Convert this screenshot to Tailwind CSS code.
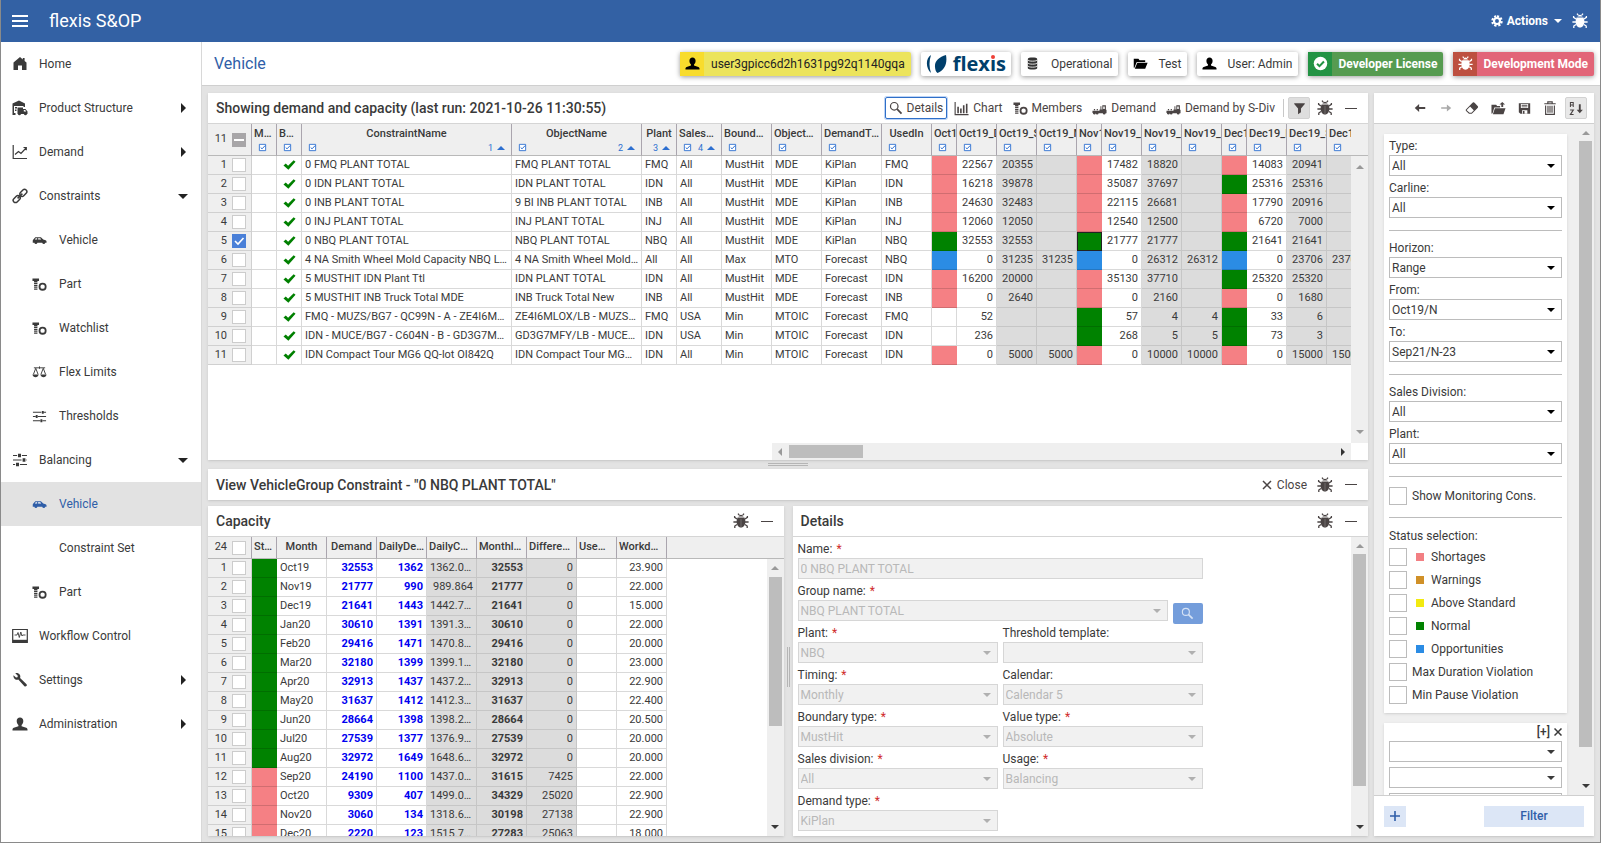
<!DOCTYPE html>
<html lang="en">
<head>
  <meta charset="UTF-8">
  <meta name="viewport" content="width=device-width, initial-scale=1.0">
  <title>flexis S&amp;OP</title>
  <script src="https://cdn.jsdelivr.net/npm/@tailwindcss/browser@4"></script>
</head>
<body class="font-['Roboto',sans-serif] text-xs text-[#3a3a3a] bg-[#e3e3e3] h-screen flex flex-col overflow-hidden border-x border-b border-[#8a8a8a]">

  <!-- icon set -->
  <svg class="hidden" aria-hidden="true">
    <symbol id="i-bug" viewBox="0 0 16 16"><path fill="currentColor" d="M5.5 3.6a2.6 2.6 0 0 1 5 0zM4.6 4.4h6.8c.7 1.2 1 2.600 1 4.200 0 3.300-1.700 6-4.400 6s-4.400-2.700-4.400-6c0-1.600.3-3 1-4.200z"/><path fill="none" stroke="currentColor" stroke-width="1.300" d="M6.200 2 5 .6M9.800 2 11 .6M4 6 1.600 4.400V3M12 6l2.400-1.600V3M4 9H.4M12 9h3.600M4 11.500 1.800 13v2M12 11.500l2.200 1.500v2"/><path stroke="#fff" stroke-opacity=".35" stroke-width=".6" d="M8 6v8"/></symbol>
    <symbol id="i-user" viewBox="0 0 16 16"><path fill="currentColor" d="M8 1.500c2 0 3.300 1.400 3.300 3.500 0 1.700-.7 3.200-1.700 4v1.200l4.600 1.500c.8.3 1.300.9 1.300 1.800v1H.5v-1c0-.9.5-1.500 1.300-1.800l4.600-1.500V9c-1-.8-1.700-2.300-1.700-4C4.700 2.900 6 1.500 8 1.500z"/></symbol>
    <symbol id="i-home" viewBox="0 0 16 16"><path fill="currentColor" d="M8 1 1.500 6.500V14H6V9.500h4V14h4.500V6.500L12.600 5V2h-1.800v1.400z"/></symbol>
    <symbol id="i-depot" viewBox="0 0 16 16"><path fill="currentColor" d="M7 .5.5 3.500V15h3V13H2V6h9.500v1H13V3.500z"/><path fill="currentColor" d="M3 7h2v1.500H3zM3 9.500h1.500V11H3zM5.500 7.500H11V9h2.500l2 2.500V14H15a1.600 1.600 0 0 1-3.100 0H9a1.600 1.600 0 0 1-3.100 0H5.500z"/><path fill="#fff" d="M11.800 10h1.400l1 1.500h-2.400z"/></symbol>
    <symbol id="i-line" viewBox="0 0 16 16"><path fill="none" stroke="currentColor" stroke-width="1.200" d="M1.200 1v13.500H15M3 10.500l3.500-3 2.500 2 5-5.500M11.500 3.500h2.800v2.800"/></symbol>
    <symbol id="i-link" viewBox="0 0 16 16"><g fill="none" stroke="currentColor" stroke-width="1.500"><rect x="7.300" y="2.600" width="8" height="4.600" rx="2.300" transform="rotate(-45 11.300 4.900)"/><rect x=".7" y="8.800" width="8" height="4.600" rx="2.300" transform="rotate(-45 4.700 11.100)"/><path d="m5.600 10.400 4.800-4.800"/></g></symbol>
    <symbol id="i-car" viewBox="0 0 16 16"><path fill="currentColor" d="M1 7.500 3.500 4.500h6L12 7l2.500.6c.7.200 1 .6 1 1.400v1.500h-1.300a1.700 1.700 0 0 1-3.300 0H5.800a1.700 1.700 0 0 1-3.300 0H.8V8z"/><path fill="#fff" d="M4 5.500 3 7h2.500V5.500zM6.500 5.500V7h3.300L8.800 5.500z"/></symbol>
    <symbol id="i-bolt" viewBox="0 0 16 16"><path fill="currentColor" d="M.5 1.500h7v2.700H5.800v1.300H2.200V4.200H.5zM2.200 6.200h3.600v1.300H2.200zM2.200 8.200h3.600v1.300H2.200zM2.200 10.200h3.600v1.300H2.200zM2.200 12.200h3.600v1.500H2.200z"/><circle cx="11.300" cy="10.300" r="3.300" fill="none" stroke="currentColor" stroke-width="1.900"/></symbol>
    <symbol id="i-scale" viewBox="0 0 16 16"><path fill="none" stroke="currentColor" stroke-width="1" d="M2 3h12M8 1.500V4M4 3.500 1.500 10M4 3.500 6.500 10M12 3.500 9.500 10M12 3.500l2.500 6.500"/><path fill="currentColor" d="M.5 10h6.500c-.3 1.800-1.500 3-3.200 3S.8 11.800.5 10zM9 10h6.500c-.3 1.800-1.500 3-3.200 3S9.300 11.800 9 10z"/></symbol>
    <symbol id="i-sliders" viewBox="0 0 16 16"><path stroke="currentColor" stroke-width="1.200" d="M1 3.500h14M1 8h14M1 12.500h14"/><path fill="currentColor" d="M6 1.800h3v3.400H6zM10.500 6.300h3v3.400h-3zM4 10.800h3v3.400H4z"/><path stroke="#fff" stroke-width=".9" d="M5.500 2v3M9.500 2v3M10 6.500v3M14 6.500v3M3.500 11v3M7.500 11v3"/></symbol>
    <symbol id="i-thresh" viewBox="0 0 16 16"><path stroke="currentColor" stroke-width="1.200" d="M1 3.500h9M12 3.500h3M1 8h3M6 8h9M1 12.500h8M11 12.500h4"/><path fill="currentColor" d="M10.500 2h2v3h-2zM4 6.500h2v3H4zM9 11h2v3H9z"/></symbol>
    <symbol id="i-monitor" viewBox="0 0 16 16"><path fill="none" stroke="currentColor" stroke-width="1.200" d="M.7 1.500h14.600v13H.7z"/><path fill="currentColor" d="M.7 11.800h14.600v2.700H.7z"/><path fill="none" stroke="currentColor" stroke-width=".9" d="M2.500 7H5l1-2.500 1.300 5L8.800 4l1.200 4 .7-1h2.800"/></symbol>
    <symbol id="i-wrench" viewBox="0 0 16 16"><path fill="currentColor" d="M1.500 3.200 4 5.500l1.500-.3.300-1.500-2.500-2.400c1.700-.5 3.400 0 4.300 1.300.8 1 .9 2.200.5 3.300l6.200 6c.7.700.7 1.600.1 2.200s-1.600.6-2.200-.1L6.300 7.600c-1.100.4-2.500.2-3.500-.7-1-.9-1.600-2.300-1.300-3.700z"/></symbol>
    <symbol id="i-gear" viewBox="0 0 16 16"><path fill="none" stroke="currentColor" stroke-width="3" stroke-dasharray="2.800 2.100" d="M8 1.800a6.200 6.200 0 1 1-.01 0"/><circle cx="8" cy="8" r="4" fill="none" stroke="currentColor" stroke-width="2.800"/></symbol>
    <symbol id="i-search" viewBox="0 0 16 16"><circle cx="6" cy="6" r="4.300" fill="none" stroke="currentColor" stroke-width="1.400"/><path stroke="currentColor" stroke-width="2" d="m9.300 9.300 5 5"/></symbol>
    <symbol id="i-bars" viewBox="0 0 16 16"><path fill="none" stroke="currentColor" stroke-width="1.200" d="M1.200 1v13.500H15.500"/><path fill="currentColor" d="M3.500 6h1.700v7H3.500zM6.500 8h1.700v5H6.500zM9.500 4.500h1.700V13H9.500zM12.700 3h1.700v10h-1.700z"/></symbol>
    <symbol id="i-truck" viewBox="0 0 16 16"><path fill="currentColor" d="M.5 10.500H8V9h1V5.500h1V9h1V4.500h3.800V9l.7.500V13h-1a1.500 1.500 0 0 1-3 0H7a1.500 1.500 0 0 1-3 0 1.500 1.500 0 0 1-3-.3H.5zM2 8.500h1.300v1.300H2zM5 8.500h1.300v1.300H5z"/><path fill="#fff" d="M12 5.800h1.600V8.500H12z"/></symbol>
    <symbol id="i-funnel" viewBox="0 0 16 16"><path fill="currentColor" d="M1.500 1.500h13v1L9.800 8v4.500L6.200 15V8L1.500 2.500z"/></symbol>
    <symbol id="i-eraser" viewBox="0 0 16 16"><path fill="#fff" stroke="currentColor" stroke-width="1.200" d="M1.500 10 9 2.500c.5-.5 1-.5 1.500 0L14 6c.5.500.5 1 0 1.500L7.500 14H4.800L1.500 11z"/><path fill="currentColor" d="M5.500 6 9 2.500c.5-.5 1-.5 1.500 0L14 6c.5.500.5 1 0 1.500L10.500 11z"/></symbol>
    <symbol id="i-folder-up" viewBox="0 0 16 16"><path fill="currentColor" d="M.5 4h5l1 1.300h3.200V6.800H3.500L1.700 13 .5 13.500zM4.200 7.700H15.500L13.300 14H2zM12 1l3 2.800h-2V6.500h-2V3.800H9z"/></symbol>
    <symbol id="i-folder" viewBox="0 0 16 16"><path fill="currentColor" d="M.8 3h5l1.200 1.500h6V6.500H4L1.500 12.500H.8zM4.600 7.300h11L13 13.500H1.900z"/></symbol>
    <symbol id="i-save" viewBox="0 0 16 16"><path fill="currentColor" d="M1 1.500h14v13H3l-2-2z"/><path fill="#fff" d="M3.500 2.500h9v5h-9zM5 10h6.500v4.500H5z"/><path fill="currentColor" d="M4.500 3.500h7v1h-7zM4.500 5.500h7v1h-7zM6 11h2v3.500H6z"/></symbol>
    <symbol id="i-trash" viewBox="0 0 16 16"><path fill="none" stroke="currentColor" stroke-width="1.300" d="M1.500 3.200h13M5.500 3V1h5v2M3 5v10.300h10V5M5.700 5.500v8M8 5.500v8M10.300 5.500v8"/></symbol>
    <symbol id="i-left" viewBox="0 0 16 16"><path fill="currentColor" d="M7 3.500v3.300h7v2.400H7v3.300L2 8z"/></symbol>
    <symbol id="i-right" viewBox="0 0 16 16"><path fill="currentColor" d="M9 4v3.200H2.500v1.600H9V12l5-4z"/></symbol>
    <symbol id="i-sort" viewBox="0 0 16 16"><path fill="none" stroke="currentColor" stroke-width="1.100" d="M1.500 6.500v-5h3v5M1.500 4.200h3M1.200 9.500h3.500l-3.300 5h3.500"/><path fill="currentColor" d="M10.500 3.500h2v5.800h2.300L11.500 13 8.200 9.300h2.300z"/></symbol>
    <symbol id="i-ok" viewBox="0 0 16 16"><circle cx="8" cy="8" r="7.200" fill="#fff"/><path fill="none" stroke="#239344" stroke-width="2.200" d="m4.300 8.200 2.600 2.600 4.800-5"/></symbol>
    <symbol id="i-db" viewBox="0 0 16 16"><path fill="#333" d="M3 3.200C3 1.200 13 1.200 13 3.200v9.800c0 2-10 2-10 0z"/><path fill="none" stroke="#fff" stroke-width=".9" d="M3 4c0 2 10 2 10 0M3 7.200c0 2 10 2 10 0M3 10.400c0 2 10 2 10 0"/></symbol>
    <symbol id="i-tick" viewBox="0 0 14 12"><path fill="#008000" d="M.5 6.500 3 4.500l2.500 2.300L11.500.8l2 1.700L5.800 11z"/></symbol>
    <symbol id="i-filt" viewBox="0 0 10 10"><path fill="#fff" stroke="#2d6fd0" d="M1.500 1.500h7v7h-7z"/><path fill="none" stroke="#2d6fd0" stroke-width="1.100" d="m3 5 1.500 1.500L8 2.800"/></symbol>
    <symbol id="i-down" viewBox="0 0 8 4"><path fill="currentColor" d="M0 0h8L4 4z"/></symbol>
    <symbol id="i-up" viewBox="0 0 8 4"><path fill="currentColor" d="M0 4h8L4 0z"/></symbol>
  </svg>

  <header class="h-[42px] shrink-0 bg-[#3361a4] text-white flex items-center pl-[11px] pr-3">
    <button class="w-4 flex flex-col gap-[3px]" aria-label="Menu">
      <span class="h-0.5 w-4 bg-white"></span><span class="h-0.5 w-4 bg-white"></span><span class="h-0.5 w-4 bg-white"></span>
    </button>
    <h1 class="ml-[21px] text-lg">flexis S&amp;OP</h1>
    <button class="ml-auto flex items-center gap-1 font-bold">
      <svg class="size-3"><use href="#i-gear"/></svg>Actions<svg class="w-2 h-1 ml-0.5"><use href="#i-down"/></svg>
    </button>
    <button class="ml-[10px]" aria-label="Debug"><svg class="size-4"><use href="#i-bug"/></svg></button>
  </header>

  <div class="flex flex-1 min-h-0">
    <nav id="nav" class="w-[201px] shrink-0 bg-white border-r border-[#d8d8d8]"></nav>

    <main class="flex-1 min-w-0 flex flex-col">
      <div class="h-[44px] shrink-0 bg-white border-b border-[#cfcfcf] flex items-center pl-3 pr-1.5 gap-[10px]">
        <h2 class="text-base text-[#2f5ea8] mr-auto">Vehicle</h2>
        <div class="h-6 flex items-center bg-[#ece45c] rounded-xs shadow-[0_1px_5px_rgba(0,0,0,0.4)] pr-1.5 text-[#222]">
          <span class="size-6 bg-[#f8dc2c] flex items-center justify-center mr-[7px] text-black"><svg class="size-[15px]"><use href="#i-user"/></svg></span>user3gpicc6d2h1631pg92q1140gqa
        </div>
        <div class="h-6 flex items-center bg-white rounded-xs shadow-[0_1px_5px_rgba(0,0,0,0.4)] px-[5px] gap-[6px]">
          <svg class="w-[21px] h-5" viewBox="0 0 21 20"><path fill="#003f6b" d="M5 1C-.5 4-.5 14 5 19 3 13 3 7 5 1zM20 1C13 3 8.500 7 9 13c.2 3 1 5 2.500 6C19 16 21.500 9 20 1z"/></svg>
          <span class="relative font-['Open_Sans',sans-serif] font-bold text-xl leading-6 text-[#003f6b]">flexıs<span class="absolute right-[11px] top-[3px] size-1 rounded-full bg-[#ee4037]"></span></span>
        </div>
        <div class="h-6 flex items-center bg-white rounded-xs shadow-[0_1px_5px_rgba(0,0,0,0.4)] pr-1.5"><span class="size-6 flex items-center justify-center mr-[6px]"><svg class="size-[15px]"><use href="#i-db"/></svg></span>Operational</div>
        <div class="h-6 flex items-center bg-white rounded-xs shadow-[0_1px_5px_rgba(0,0,0,0.4)] pr-1.5"><span class="size-6 flex items-center justify-center mr-[6px] text-black"><svg class="size-[15px]"><use href="#i-folder"/></svg></span>Test</div>
        <div class="h-6 flex items-center bg-white rounded-xs shadow-[0_1px_5px_rgba(0,0,0,0.4)] pr-1.5"><span class="size-6 flex items-center justify-center mr-[6px] text-black"><svg class="size-[15px]"><use href="#i-user"/></svg></span>User: Admin</div>
        <div class="h-6 flex items-center bg-[#569b50] rounded-xs shadow-[0_1px_5px_rgba(0,0,0,0.4)] pr-1.5 text-white font-bold"><span class="size-6 bg-[#239344] flex items-center justify-center mr-[6px]"><svg class="size-[15px]"><use href="#i-ok"/></svg></span>Developer License</div>
        <div class="h-6 flex items-center bg-[#e26578] rounded-xs shadow-[0_1px_5px_rgba(0,0,0,0.4)] pr-1.5 text-white font-bold"><span class="size-6 bg-[#bd5040] flex items-center justify-center mr-[6px]"><svg class="size-[15px]"><use href="#i-bug"/></svg></span>Development Mode</div>
      </div>

      <div class="flex-1 min-h-0 flex pt-[7px] pb-1.5 px-1.5 gap-1.5">

        <div class="flex-1 min-w-0 flex flex-col">
          <!-- demand and capacity grid -->
          <section class="flex-[367_1_0%] min-h-0 bg-white shadow flex flex-col">
            <div class="h-[30px] shrink-0 flex items-center pl-2 pr-[11px]">
              <h3 class="text-sm font-medium mr-auto">Showing demand and capacity (last run: 2021-10-26 11:30:55)</h3>
              <div class="flex items-center text-[#4a4444]">
                <button class="h-[22px] flex items-center gap-1 border border-[#2f6fc8] rounded-xs px-[3px] ring-1 ring-[#bcd3f5] mr-[7px]"><svg class="size-[14px]"><use href="#i-search"/></svg>Details</button>
                <button class="flex items-center gap-1 mr-[10px]"><svg class="size-[15px]"><use href="#i-bars"/></svg>Chart</button>
                <button class="flex items-center gap-1 mr-[10px]"><svg class="size-[15px]"><use href="#i-bolt"/></svg>Members</button>
                <button class="flex items-center gap-1 mr-[10px]"><svg class="size-[15px]"><use href="#i-truck"/></svg>Demand</button>
                <button class="flex items-center gap-1 mr-2"><svg class="size-[15px]"><use href="#i-truck"/></svg>Demand by S-Div</button>
                <span class="w-px h-[18px] bg-[#c8c8c8]"></span>
                <button class="h-[22px] w-[22px] ml-1 flex items-center justify-center bg-[#dedede] border border-[#d2d2d2] rounded-xs" aria-label="Filter grid"><svg class="size-[13px]"><use href="#i-funnel"/></svg></button>
                <button class="ml-[7px]" aria-label="Debug"><svg class="size-4"><use href="#i-bug"/></svg></button>
                <button class="ml-3 w-3 h-4 flex items-center" aria-label="Minimize"><span class="w-3 h-px bg-[#4a4444]"></span></button>
              </div>
            </div>
            <div class="flex-1 min-h-0 flex border-t border-[#d5d5d5]">
              <div class="flex-1 min-w-0 flex flex-col">
                <div class="flex-1 overflow-hidden">
                  <table class="table-fixed w-[1159px] border-separate border-spacing-0 text-[11px]">
                    <colgroup id="mainCols"></colgroup>
                    <thead id="mainHead"></thead>
                    <tbody id="mainBody"></tbody>
                  </table>
                </div>
                <div class="h-[17px] shrink-0 ml-[564px] bg-[#efefef] flex items-center justify-between px-1.5">
                  <svg class="w-1 h-2 text-[#999]" viewBox="0 0 4 8"><path fill="currentColor" d="M4 0v8L0 4z"/></svg>
                  <span class="w-[74px] h-[13px] bg-[#bdbdbd] ml-[7px] mr-auto"></span>
                  <svg class="w-1 h-2" viewBox="0 0 4 8"><path fill="#333" d="M0 0v8l4-4z"/></svg>
                </div>
              </div>
              <div class="w-[17px] flex flex-col">
                <div class="h-8 bg-[#efefef] border-b border-[#b9b9b9]"></div>
                <div class="flex-1 bg-[#efefef] flex flex-col items-center justify-between py-[9px] text-[#999]">
                  <svg class="w-2 h-1"><use href="#i-up"/></svg><svg class="w-2 h-1"><use href="#i-down"/></svg>
                </div>
                <div class="h-[17px] bg-white"></div>
              </div>
            </div>
          </section>

          <div class="h-[9px] shrink-0 flex flex-col items-center justify-center gap-px">
            <span class="w-10 h-px bg-[#b5b5b5]"></span><span class="w-10 h-px bg-[#b5b5b5]"></span>
          </div>

          <section class="h-[31px] shrink-0 bg-white shadow flex items-center pl-2 pr-[11px] text-[#4a4444]">
            <h3 class="text-sm font-medium mr-auto text-[#3a3a3a]">View VehicleGroup Constraint - "0 NBQ PLANT TOTAL"</h3>
            <button class="flex items-center gap-[5px]"><svg class="size-[10px]" viewBox="0 0 10 10"><path stroke="currentColor" stroke-width="1.500" d="m1 1 8 8M9 1 1 9"/></svg>Close</button>
            <button class="ml-[10px]" aria-label="Debug"><svg class="size-4"><use href="#i-bug"/></svg></button>
            <button class="ml-3 w-3 h-4 flex items-center" aria-label="Minimize"><span class="w-3 h-px bg-[#4a4444]"></span></button>
          </section>

          <div class="flex-[330_1_0%] min-h-0 mt-1.5 flex">
            <!-- capacity -->
            <section class="flex-1 min-w-0 bg-white shadow flex flex-col">
              <div class="h-[30px] shrink-0 flex items-center pl-2 pr-[11px] text-[#4a4444]">
                <h3 class="text-sm font-medium mr-auto text-[#3a3a3a]">Capacity</h3>
                <button aria-label="Debug"><svg class="size-4"><use href="#i-bug"/></svg></button>
                <button class="ml-3 w-3 h-4 flex items-center" aria-label="Minimize"><span class="w-3 h-px bg-[#4a4444]"></span></button>
              </div>
              <div class="flex-1 min-h-0 flex border-t border-[#d5d5d5]">
                <div class="flex-1 min-w-0 overflow-hidden">
                  <table class="table-fixed w-full border-separate border-spacing-0 text-[11px]">
                    <colgroup id="capCols"></colgroup>
                    <thead id="capHead"></thead>
                    <tbody id="capBody"></tbody>
                  </table>
                </div>
                <div class="w-[17px] flex flex-col">
                  <div class="h-[22px] bg-[#efefef] border-b border-[#b9b9b9]"></div>
                  <div class="flex-1 bg-[#efefef] flex flex-col items-center py-[7px]">
                    <svg class="w-2 h-1 text-[#999]"><use href="#i-up"/></svg>
                    <span class="w-[13px] h-[149px] mt-[7px] mb-auto bg-[#bdbdbd]"></span>
                    <svg class="w-2 h-1"><use href="#i-down"/></svg>
                  </div>
                </div>
              </div>
            </section>

            <div class="w-[9px] shrink-0 flex items-center justify-center gap-px pb-2">
              <span class="h-10 w-px bg-[#b5b5b5]"></span><span class="h-10 w-px bg-[#b5b5b5]"></span>
            </div>

            <!-- details form -->
            <section class="flex-1 min-w-0 bg-white shadow flex flex-col">
              <div class="h-[30px] shrink-0 flex items-center pl-2 pr-[11px] text-[#4a4444]">
                <h3 class="text-sm font-medium mr-auto text-[#3a3a3a]">Details</h3>
                <button aria-label="Debug"><svg class="size-4"><use href="#i-bug"/></svg></button>
                <button class="ml-3 w-3 h-4 flex items-center" aria-label="Minimize"><span class="w-3 h-px bg-[#4a4444]"></span></button>
              </div>
              <div class="flex-1 min-h-0 flex border-t border-[#d5d5d5]">
                <form id="details" class="flex-1 min-w-0 overflow-hidden pl-[5px] grid grid-cols-[200px_200px] gap-x-[5px] content-start"></form>
                <div class="w-[17px] bg-[#efefef] flex flex-col items-center py-[7px]">
                  <svg class="w-2 h-1 text-[#999]"><use href="#i-up"/></svg>
                  <span class="w-[13px] h-[232px] mt-1.5 mb-auto bg-[#bdbdbd]"></span>
                  <svg class="w-2 h-1"><use href="#i-down"/></svg>
                </div>
              </div>
            </section>
          </div>
        </div>

        <!-- filter panel -->
        <aside class="w-[220px] shrink-0 bg-white shadow flex flex-col">
          <div class="h-[30px] shrink-0 flex items-center justify-end pr-[7px] gap-3 text-[#4a4444]">
            <button aria-label="Back"><svg class="size-[14px]"><use href="#i-left"/></svg></button>
            <button class="text-[#aaa]" aria-label="Forward"><svg class="size-[14px]"><use href="#i-right"/></svg></button>
            <button aria-label="Clear"><svg class="size-[14px]"><use href="#i-eraser"/></svg></button>
            <button aria-label="Open"><svg class="size-[15px]"><use href="#i-folder-up"/></svg></button>
            <button aria-label="Save"><svg class="size-[13px]"><use href="#i-save"/></svg></button>
            <button aria-label="Delete"><svg class="w-[14px] h-4"><use href="#i-trash"/></svg></button>
            <button class="size-[22px] -ml-1 flex items-center justify-center bg-[#e8e8e8] border border-[#d2d2d2] rounded-xs" aria-label="Sort"><svg class="size-[15px]"><use href="#i-sort"/></svg></button>
          </div>
          <div class="flex-1 min-h-0 flex bg-[#efefef] border-y border-[#cfcfcf]">
            <div class="flex-1 min-w-0 overflow-hidden px-[10px] pt-[10px]">
              <form id="filters" class="bg-white shadow px-[5px] pb-1"></form>
              <div class="bg-white shadow px-[5px] mt-[10px] pb-4 flex flex-col gap-[5px]">
                <div class="h-[13px] flex items-center justify-end gap-1 pt-[5px] leading-3"><button class="font-medium" aria-label="Expand">[+]</button><button aria-label="Remove"><svg class="size-2" viewBox="0 0 8 8"><path stroke="currentColor" stroke-width="1.500" d="m.5.5 7 7M7.500.5l-7 7"/></svg></button></div>
                <div class="relative"><select class="appearance-none block w-full h-[21px] border border-[#bcbcbc] bg-white" aria-label="Extra field"><option></option></select><svg class="absolute right-[7px] top-[9px] w-2 h-1 pointer-events-none"><use href="#i-down"/></svg></div>
                <div class="relative"><select class="appearance-none block w-full h-[21px] border border-[#bcbcbc] bg-white" aria-label="Extra operator"><option></option></select><svg class="absolute right-[7px] top-[9px] w-2 h-1 pointer-events-none"><use href="#i-down"/></svg></div>
                <input class="block w-full h-[21px] border border-[#bcbcbc] bg-white" aria-label="Extra value">
              </div>
            </div>
            <div class="w-[17px] flex flex-col items-center py-[7px]">
              <svg class="w-2 h-1 text-[#999]"><use href="#i-up"/></svg>
              <span class="w-[13px] h-[606px] mt-1.5 mb-auto bg-[#bdbdbd]"></span>
              <svg class="w-2 h-1"><use href="#i-down"/></svg>
            </div>
          </div>
          <div class="h-10 shrink-0 flex items-center justify-between px-[10px]">
            <button class="w-[22px] h-[21px] bg-[#dce6f6] flex items-center justify-center text-[#2f5ea8]" aria-label="Add"><svg class="size-[10px]" viewBox="0 0 10 10"><path stroke="currentColor" stroke-width="1.600" d="M5 0v10M0 5h10"/></svg></button>
            <button class="w-[100px] h-[21px] bg-[#dce6f6] text-[#2f5ea8] font-medium">Filter</button>
          </div>
        </aside>
      </div>
    </main>
  </div>

  <script>
    const el = (id) => document.getElementById(id);
    const icon = (name, cls) => `<svg class="${cls}"><use href="#i-${name}"/></svg>`;

    // ---- navigation ----
    const nav = [
      ["Home", "home"], ["Product Structure", "depot", "r"], ["Demand", "line", "r"], ["Constraints", "link", "d"],
      ["Vehicle", "car", "", 1], ["Part", "bolt", "", 1], ["Watchlist", "bolt", "", 1], ["Flex Limits", "scale", "", 1], ["Thresholds", "thresh", "", 1],
      ["Balancing", "sliders", "d"], ["Vehicle", "car", "", 1, 1], ["Constraint Set", "", "", 1], ["Part", "bolt", "", 1],
      ["Workflow Control", "monitor"], ["Settings", "wrench", "r"], ["Administration", "user", "r"],
    ];
    const arrows = {
      r: '<svg class="w-[5px] h-[10px] ml-auto" viewBox="0 0 5 10"><path fill="#222" d="M0 0v10l5-5z"/></svg>',
      d: '<svg class="w-[10px] h-[5px] -mr-[2px] ml-auto" viewBox="0 0 10 5"><path fill="#222" d="M0 0h10L5 5z"/></svg>',
    };
    el("nav").innerHTML = nav.map(([text, ic, arrow, sub, on]) => `
      <a href="#" class="h-[44px] flex items-center pr-[15px] ${sub ? "pl-[31px]" : "pl-[11px]"} ${on ? "bg-[#e2e2e2] text-[#2f5ea8]" : ""}">
        <span class="w-4 mr-[11px] flex">${ic ? icon(ic, sub ? "size-[15px]" : "size-4") : ""}</span>${text}${arrow ? arrows[arrow] : ""}
      </a>`).join("");

    // ---- grids ----
    const status = { r: "bg-[#f58084]", g: "bg-[#008200]", b: "bg-[#2b8ce4]", "": "bg-white" };
    const TH = "relative bg-[#efefef] border-r border-b border-r-[#aaa5ae] border-b-[#b9b9b9] p-0 font-medium";
    const TD = "h-[19px] border-r border-b border-[#d9d9d9] px-[3px] py-0 leading-[18px] truncate";
    const box = "appearance-none block size-[14px] border border-[#ccc] bg-white";
    const cols = (w) => w.map((n) => `<col style="width:${n}px">`).join("");
    const indexCell = (n, on) => `
      <td class="h-[19px] bg-[#efefef] border-r border-b border-[#d0d0d0] p-0">
        <div class="flex items-center justify-end gap-[5px] pr-[5px] leading-[18px]">${n}
          ${on ? `<span class="relative"><input type="checkbox" checked aria-label="Row ${n}" class="appearance-none block size-[14px] bg-[#4a80d8]"><svg class="absolute inset-0 size-[14px] pointer-events-none" viewBox="0 0 14 14"><path fill="none" stroke="#fff" stroke-width="1.600" d="m3 7 3 3 5.500-6"/></svg></span>`
               : `<input type="checkbox" aria-label="Row ${n}" class="${box}">`}
        </div>
      </td>`;

    el("mainCols").innerHTML = cols([44, 25, 25, 210, 130, 35, 45, 50, 50, 60, 50, 25, 40, 40, 40, 25, 40, 40, 40, 25, 40, 40, 40]);
    const heads = [["Monitored"], ["Balanced"], ["ConstraintName", 1], ["ObjectName", 2], ["Plant", 3, 1], ["SalesDivision", 4], ["BoundaryType"], ["ObjectType"], ["DemandType"], ["UsedIn"]];
    const months = ["Oct19", "Nov19", "Dec19"].flatMap((m) => [m, m + "_D", m + "_S", m + "_M"]);
    const headCell = (text, sort, bare, clip) => `
      <th class="${TH}">
        <div class="h-[16px] leading-[20px] px-[2px] overflow-hidden whitespace-nowrap ${clip ? "text-left" : "text-center text-ellipsis"}">${text}</div>
        <div class="h-[15px] flex items-center px-1.5 text-[9px] font-normal text-[#2d6fd0]">
          ${bare ? "" : icon("filt", "size-[9px]")}${sort ? `<span class="ml-auto mr-1">${sort}</span>${icon("up", "w-2 h-1")}` : ""}
        </div>
      </th>`;
    el("mainHead").innerHTML = `<tr class="h-8">
      <th class="${TH}"><div class="flex items-center justify-end gap-[5px] pr-[5px] font-normal">11
        <span class="size-[14px] bg-[#a8a6a8] flex items-center justify-center"><span class="w-[10px] h-0.5 bg-white"></span></span></div></th>
      ${heads.map((h) => headCell(...h)).join("")}${months.map((m) => headCell(m, 0, 0, 1)).join("")}</tr>`;

    // name | object | plant | sales | bound | type | demand | used | then status,demand,supply,missing per month
    const rows = `0 FMQ PLANT TOTAL|FMQ PLANT TOTAL|FMQ|All|MustHit|MDE|KiPlan|FMQ|r|22567|20355||r|17482|18820||r|14083|20941|
0 IDN PLANT TOTAL|IDN PLANT TOTAL|IDN|All|MustHit|MDE|KiPlan|IDN|r|16218|39878||r|35087|37697||g|25316|25316|
0 INB PLANT TOTAL|9 BI INB PLANT TOTAL|INB|All|MustHit|MDE|KiPlan|INB|r|24630|32483||r|22115|26681||r|17790|20916|
0 INJ PLANT TOTAL|INJ PLANT TOTAL|INJ|All|MustHit|MDE|KiPlan|INJ|r|12060|12050||r|12540|12500||r|6720|7000|
0 NBQ PLANT TOTAL|NBQ PLANT TOTAL|NBQ|All|MustHit|MDE|KiPlan|NBQ|g|32553|32553||g|21777|21777||g|21641|21641|
4 NA Smith Wheel Mold Capacity NBQ Limit|4 NA Smith Wheel Mold Capacity|All|All|Max|MTO|Forecast|NBQ|b|0|31235|31235|b|0|26312|26312|b|0|23706|23706
5 MUSTHIT IDN Plant Ttl|IDN PLANT TOTAL|IDN|All|MustHit|MDE|Forecast|IDN|r|16200|20000||r|35130|37710||g|25320|25320|
5 MUSTHIT INB Truck Total MDE|INB Truck Total New|INB|All|MustHit|MDE|Forecast|INB|r|0|2640||r|0|2160||r|0|1680|
FMQ - MUZS/BG7 - QC99N - A - ZE4I6MLOX|ZE4I6MLOX/LB - MUZS/BG7|FMQ|USA|Min|MTOIC|Forecast|FMQ||52|||g|57|4|4|g|33|6|
IDN - MUCE/BG7 - C604N - B - GD3G7MFY|GD3G7MFY/LB - MUCE/BG7|IDN|USA|Min|MTOIC|Forecast|IDN||236|||g|268|5|5|g|73|3|
IDN Compact Tour MG6 QQ-lot OI842Q|IDN Compact Tour MG6 QQ|IDN|All|Min|MTOIC|Forecast|IDN|r|0|5000|5000|r|0|10000|10000|r|0|15000|15000`
      .split("\n").map((r) => r.split("|"));
    el("mainBody").innerHTML = rows.map((r, i) => `<tr>${indexCell(i + 1, i === 4)}
      <td class="${TD}"></td><td class="${TD}">${icon("tick", "w-[13px] h-3 mx-auto")}</td>
      ${r.slice(0, 8).map((v) => `<td class="${TD}">${v}</td>`).join("")}
      ${r.slice(8).map((v, c) => {
        if (c % 4 === 0) return `<td class="h-[19px] p-0 border-b ${v ? "border-black/15" : "border-r border-[#d9d9d9]"} ${status[v]} ${i === 4 && c === 4 ? "outline outline-1 -outline-offset-1 outline-[#222]" : ""}"></td>`;
        if (c % 4 === 1) return `<td class="${TD} text-right">${v}</td>`;
        return `<td class="h-[19px] border-r border-b border-[#c6c6c6] px-[3px] py-0 leading-[18px] bg-[#dcdcdc] text-right overflow-hidden whitespace-nowrap">${v}</td>`;
      }).join("")}</tr>`).join("");

    el("capCols").innerHTML = cols([44, 25, 50, 50, 50, 50, 50, 50, 40, 50]) + "<col>";
    el("capHead").innerHTML = `<tr class="h-[22px]">
      <th class="${TH}"><div class="flex items-center justify-end gap-[5px] pr-[5px] font-normal">24<input type="checkbox" aria-label="All rows" class="${box}"></div></th>
      ${["Status", "Month", "Demand", "DailyDemand", "DailyCapacity", "MonthlyCapacity", "Difference", "UseMargin", "Workdays"].map((t) => `<th class="${TH}"><div class="px-[2px] truncate">${t}</div></th>`).join("")}
      <th class="bg-[#efefef] border-b border-[#b9b9b9] p-0"></th></tr>`;
    const cap = `g Oct19 32553 1362 1362.050 32553 0 23.900
g Nov19 21777 990 989.864 21777 0 22.000
g Dec19 21641 1443 1442.733 21641 0 15.000
g Jan20 30610 1391 1391.364 30610 0 22.000
g Feb20 29416 1471 1470.800 29416 0 20.000
g Mar20 32180 1399 1399.130 32180 0 23.000
g Apr20 32913 1437 1437.249 32913 0 22.900
g May20 31637 1412 1412.366 31637 0 22.400
g Jun20 28664 1398 1398.244 28664 0 20.500
g Jul20 27539 1377 1376.950 27539 0 20.000
g Aug20 32972 1649 1648.600 32972 0 20.000
r Sep20 24190 1100 1437.045 31615 7425 22.000
r Oct20 9309 407 1499.083 34329 25020 22.900
r Nov20 3060 134 1318.690 30198 27138 22.900
r Dec20 2220 123 1515.722 27283 25063 18.000`.split("\n").map((r) => r.split(" "));
    const GD = "h-[19px] border-r border-b border-[#c6c6c6] bg-[#dcdcdc] px-[3px] py-0 leading-[18px] text-right truncate";
    el("capBody").innerHTML = cap.map((r, i) => `<tr>${indexCell(i + 1)}
      <td class="h-[19px] p-0 border-b border-black/15 ${status[r[0]]}"></td>
      <td class="${TD}">${r[1]}</td>
      <td class="${TD} text-right font-bold text-[#0000f0]">${r[2]}</td>
      <td class="${TD} text-right font-bold text-[#0000f0]">${r[3]}</td>
      <td class="${GD}">${r[4]}</td><td class="${GD} font-bold">${r[5]}</td><td class="${GD}">${r[6]}</td>
      <td class="${TD}"></td><td class="${TD} text-right">${r[7]}</td><td></td></tr>`).join("");

    // ---- details form ----
    const star = '<span class="text-[#d02c2c] ml-1">*</span>';
    const fields = [["Plant", "NBQ", 1], ["Threshold template", ""], ["Timing", "Monthly", 1], ["Calendar", "Calendar 5"], ["Boundary type", "MustHit", 1],
      ["Value type", "Absolute", 1], ["Sales division", "All", 1], ["Usage", "Balancing", 1], ["Demand type", "KiPlan", 1]];
    const dis = "appearance-none block w-full h-[21px] px-[2px] border border-[#d6d6d6] bg-[#f1f1f1] text-[#b8b8b8] opacity-100";
    const disSelect = (id, v) => `<div class="relative flex-1"><select id="${id}" disabled class="${dis}"><option>${v}</option></select>${icon("down", "absolute right-[7px] top-[9px] w-2 h-1 text-[#b0b0b0] pointer-events-none")}</div>`;
    el("details").innerHTML = `
      <div class="col-span-2"><label for="d-name" class="block h-[21px] leading-6">Name:${star}</label><input id="d-name" disabled value="0 NBQ PLANT TOTAL" class="${dis}"></div>
      <div class="col-span-2"><label for="d-group" class="block h-[21px] leading-6">Group name:${star}</label>
        <div class="flex gap-[5px] h-[21px]">${disSelect("d-group", "NBQ PLANT TOTAL")}
          <button type="button" class="mt-[3px] w-[30px] h-[21px] rounded-xs bg-[#749ddb] text-[#d5e2f5] flex items-center justify-center" aria-label="Search group">${icon("search", "size-[13px]")}</button></div></div>
      ${fields.map(([l, v, req], i) => `<div><label for="d${i}" class="block h-[21px] leading-6">${l}:${req ? star : ""}</label>${disSelect("d" + i, v)}</div>`).join("")}`;

    // ---- filter form ----
    const sel = (l, v) => `<label class="block"><span class="block h-[21px] leading-6">${l}:</span><span class="relative block"><select class="appearance-none block w-full h-[21px] px-[2px] border border-[#bcbcbc] bg-white"><option>${v}</option></select>${icon("down", "absolute right-[7px] top-[9px] w-2 h-1 text-black pointer-events-none")}</span></label>`;
    const hr = (cls) => `<hr class="mt-3 border-[#bcbcbc] ${cls}">`;
    const chk = (l, c) => `<label class="flex items-center h-[18px] mb-[5px]"><input type="checkbox" class="appearance-none size-[18px] border border-[#bcbcbc] bg-white mr-[5px]">${c ? `<span class="size-2 ml-[4px] mr-[7px] ${c}"></span>` : ""}${l}</label>`;
    el("filters").innerHTML = sel("Type", "All") + sel("Carline", "All") + hr("mb-[5px]") +
      sel("Horizon", "Range") + sel("From", "Oct19/N") + sel("To", "Sep21/N-23") + hr("mb-[5px]") +
      sel("Sales Division", "All") + sel("Plant", "All") + hr("mb-[10px]") +
      chk("Show Monitoring Cons.") + hr("mb-1.5") +
      `<p class="h-6 leading-6">Status selection:</p>` +
      chk("Shortages", "bg-[#f27f83]") + chk("Warnings", "bg-[#d09028]") + chk("Above Standard", "bg-[#f2ea10]") + chk("Normal", "bg-[#008200]") + chk("Opportunities", "bg-[#2b8ce4]") +
      chk("Max Duration Violation") + chk("Min Pause Violation");
  </script>
</body>
</html>
